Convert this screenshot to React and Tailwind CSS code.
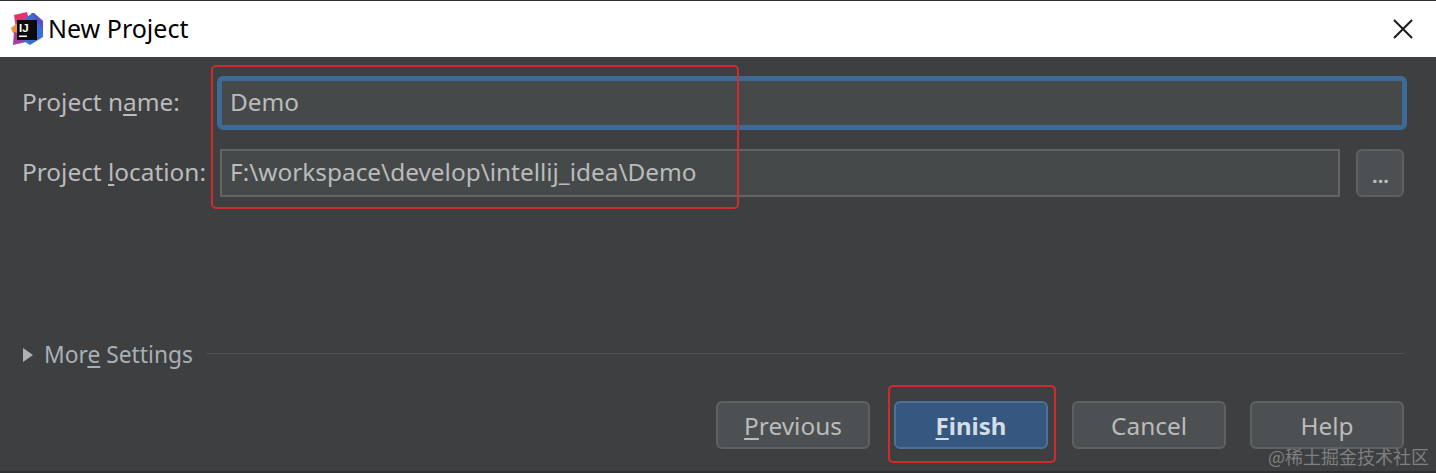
function Mnemonic({ before, letter, after }) {
  return (
    <span className="whitespace-nowrap">
      {before}
      <span className="underline decoration-[1.5px] underline-offset-[3px]">{letter}</span>
      {after}
    </span>
  );
}

function IdeaLogo() {
  return (
    <svg width="34" height="34" viewBox="0 0 34 34" className="shrink-0">
      <polygon points="4,3 17,0 20,12 6,17" fill="#e8326f" />
      <polygon points="1,16 9,10 9,22 3,21" fill="#f08a3c" />
      <polygon points="3,33 4,20 18,24 16,30" fill="#a83fa0" />
      <polygon points="15,6 23,1 33,9 33,25 20,33 12,28" fill="#3b6fd8" />
      <polygon points="21,1 24,1 33,9 33,18" fill="#5a4fc4" />
      <rect x="7" y="8" width="20" height="20" fill="#0b0b0b" />
      <text x="9" y="20" fill="#ffffff" fontSize="11.5" fontWeight="700" fontFamily="'Liberation Sans', sans-serif">IJ</text>
      <rect x="9" y="23.5" width="8" height="1.5" fill="#ffffff" />
    </svg>
  );
}

function DialogButton({ primary, children }) {
  return (
    <button
      className={
        primary
          ? "w-[154px] h-[48px] pt-[2px] rounded-md border-2 border-[#4b7298] bg-[#365880] text-[#d4dde6] font-bold text-[24px] leading-none"
          : "w-[154px] h-[48px] pt-[2px] rounded-md border-2 border-[#5e6162] bg-[#4c5052] text-[#bbbbbb] text-[24.4px] leading-none"
      }
    >
      {children}
    </button>
  );
}

export default function App() {
  return (
    <div className="relative w-[1436px] h-[473px] overflow-hidden bg-[#3e3f41] font-['Noto_Sans','Open_Sans',sans-serif]">
      <div className="h-px bg-[#2f2f2f]" />

      {/* title bar */}
      <div className="h-[56px] bg-white flex items-center pl-[10px] pr-[22px]">
        <IdeaLogo />
        <span className="ml-[4px] text-[25px] leading-none text-black -mt-[2px]">New Project</span>
        <svg width="22" height="22" viewBox="0 0 22 22" className="ml-auto text-[#1a1a1a]">
          <path d="M2 2 L20 20 M20 2 L2 20" stroke="currentColor" strokeWidth="2" fill="none" />
        </svg>
      </div>

      {/* form */}
      <div className="pl-[22px] pr-[32px] pt-[23px] flex flex-col text-[24.4px] text-[#bbbbbb]">
        <div className="flex items-center h-[46px]">
          <label className="w-[200px] shrink-0 -mt-[1px]"><Mnemonic before="Project n" letter="a" after="me:" /></label>
          <div className="w-[1180px] h-[44px] bg-[#45494a] flex items-center pl-[8px] outline-[5px] outline-[#3e6a98] rounded-[1px]">
            <span className="-mt-[1px]">Demo</span>
          </div>
        </div>
        <div className="flex items-center h-[48px] mt-[23px]">
          <label className="w-[198px] shrink-0 -mt-[1px]"><Mnemonic before="Project " letter="l" after="ocation:" /></label>
          <div className="w-[1120px] h-[48px] bg-[#45494a] border-2 border-[#646464] flex items-center pl-[8px]">
            <span className="-mt-[1px]">F:\workspace\develop\intellij_idea\Demo</span>
          </div>
          <button className="ml-[16px] w-[48px] h-[48px] rounded-md border-2 border-[#5e6162] bg-[#4c5052] text-[#bbbbbb] text-[20px] font-bold leading-none pt-[5px] pl-[1px]">
            ...
          </button>
        </div>

        <div className="flex items-center h-[30px] mt-[143px]">
          <svg width="10" height="14" viewBox="0 0 10 14" className="shrink-0 ml-[1px]">
            <polygon points="0,0 10,7 0,14" fill="#afb1b3" />
          </svg>
          <span className="ml-[11px] text-[22.8px] text-[#a9b0b5]"><Mnemonic before="Mor" letter="e" after=" Settings" /></span>
          <div className="ml-[13px] flex-1 h-px bg-[#515151] -mt-[4px]" />
        </div>

        <div className="flex justify-end gap-[24px] mt-[31px]">
          <DialogButton><Mnemonic before="" letter="P" after="revious" /></DialogButton>
          <DialogButton primary><Mnemonic before="" letter="F" after="inish" /></DialogButton>
          <DialogButton>Cancel</DialogButton>
          <DialogButton>Help</DialogButton>
        </div>
      </div>

      {/* red annotation boxes */}
      <div className="absolute left-[211px] top-[65px] w-[528px] h-[144px] rounded-[5px] border-2 border-[#d12c2c]" />
      <div className="absolute left-[888px] top-[385px] w-[168px] h-[78px] rounded-[5px] border-2 border-[#d12c2c]" />

      {/* watermark */}
      <div className="absolute left-[1268px] top-[444px] text-[18px] leading-[24px] text-[#7d7f80] font-['Noto_Sans_CJK_SC',sans-serif]">
        @稀土掘金技术社区
      </div>

      <div className="absolute left-0 right-0 bottom-0 h-[2px] bg-[#2f2f2f]" />
    </div>
  );
}
